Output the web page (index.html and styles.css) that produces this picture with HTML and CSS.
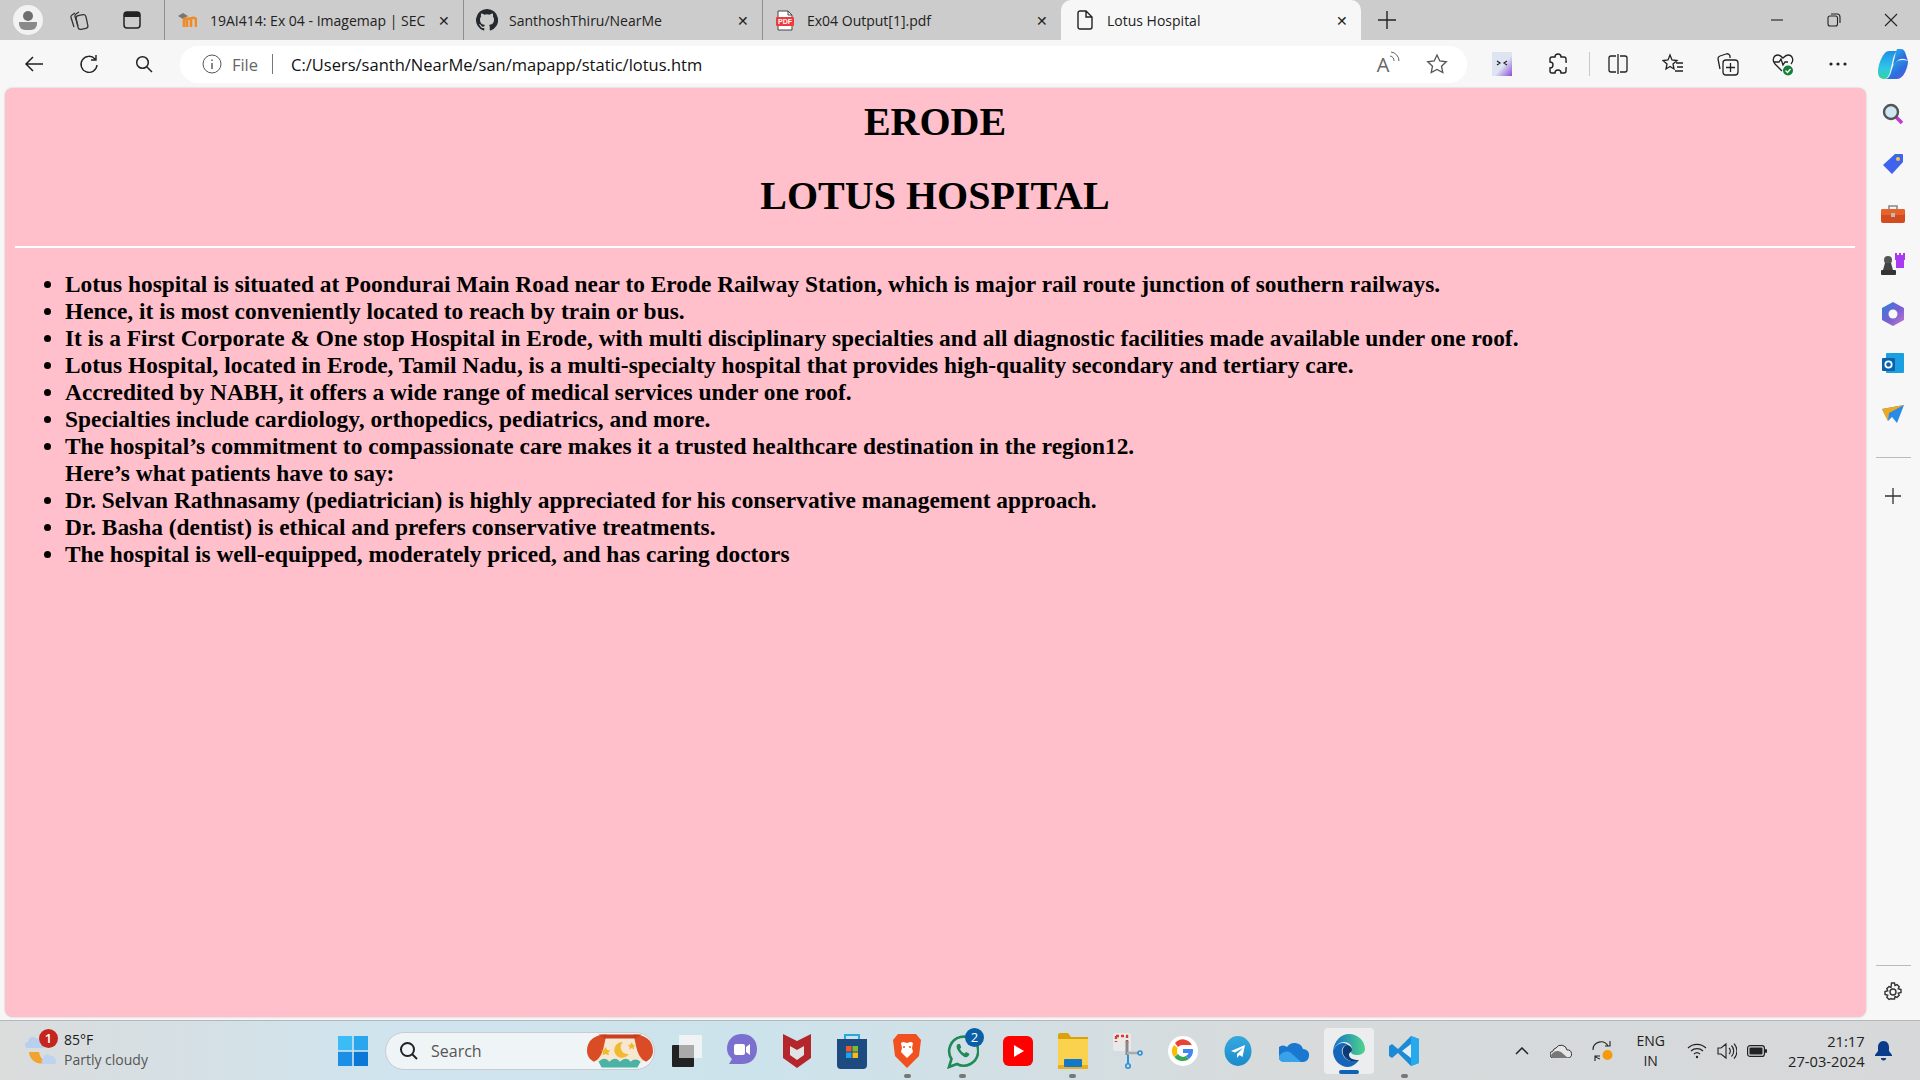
FILE: index.html
```html
<!DOCTYPE html>
<html lang="en">
<head>
    <meta charset="UTF-8">
    <meta name="viewport" content="width=device-width, initial-scale=1.0">
    <title>Lotus Hospital</title>
    <link rel="stylesheet" href="styles.css">
</head>
<body>
    <div class="tab-bar">
        <div class="tab-tools">
            <span class="profile"><svg width="20" height="22" viewBox="0 0 20 22"><circle cx="10" cy="7" r="5" fill="#6e6e6e"/><path d="M1 13h18v2a6 6 0 0 1-6 6H7a6 6 0 0 1-6-6z" fill="#8a8a8a"/></svg></span>
            <span class="tool-slot"><svg width="22" height="22" viewBox="0 0 22 22" fill="none" stroke="#333" stroke-width="1.3"><rect x="9" y="6" width="10" height="14" rx="2.5" transform="rotate(-12 14 13)"/><path d="M7 4 4 6c-1 .6-1.300 1.500-1 2.500L6 18M11 3 8 5c-1 .6-1.300 1.500-1 2.500L10 17"/></svg></span>
            <span class="tool-slot"><svg width="20" height="20" viewBox="0 0 20 20"><rect x="2" y="2" width="16" height="16" rx="3" fill="none" stroke="#222" stroke-width="1.500"/><path d="M2 5a3 3 0 0 1 3-3h10a3 3 0 0 1 3 3v2H2z" fill="#222"/></svg></span>
        </div>
        <div class="tab">
            <svg class="tab-icon" width="20" height="16" viewBox="0 0 20 16"><path d="M1 4 6 1l5 3-5 3z" fill="#777"/><path d="M7 15V8c0-2 3-2 3 0v7m0-7c0-2 4-2 4 0v7m0-7c0-3 5-3 5 0v7" fill="none" stroke="#f08a24" stroke-width="2.600"/></svg>
            <span class="tab-title">19AI414: Ex 04 - Imagemap | SEC</span>
            <span class="tab-close">&#10005;</span>
        </div>
        <div class="tab">
            <svg class="tab-icon" width="22" height="22" viewBox="0 0 16 16"><path fill="#24292f" d="M8 0a8 8 0 0 0-2.530 15.590c.4.070.55-.17.55-.38v-1.340c-2.230.48-2.700-1.070-2.700-1.070-.36-.93-.89-1.170-.89-1.170-.73-.5.050-.49.050-.49.800.060 1.230.83 1.230.83.710 1.220 1.870.870 2.330.660.070-.520.280-.870.510-1.070-1.780-.2-3.640-.89-3.640-3.950 0-.870.310-1.590.820-2.150-.080-.2-.360-1.020.080-2.120 0 0 .670-.210 2.200.820a7.600 7.600 0 0 1 4 0c1.530-1.040 2.200-.820 2.200-.820.440 1.100.160 1.920.080 2.120.510.560.820 1.270.820 2.150 0 3.070-1.870 3.750-3.650 3.950.290.250.540.730.540 1.480v2.190c0 .210.150.460.550.380A8 8 0 0 0 8 0z"/></svg>
            <span class="tab-title">SanthoshThiru/NearMe</span>
            <span class="tab-close">&#10005;</span>
        </div>
        <div class="tab">
            <svg class="tab-icon" width="20" height="22" viewBox="0 0 20 22"><path d="M3 2h10l4 4v15H3z" fill="#fff" stroke="#444"/><path d="M13 2v4h4" fill="none" stroke="#444"/><rect x="1" y="8" width="18" height="9" rx="1" fill="#f03a3e"/><text x="10" y="15" class="pdf-mark">PDF</text></svg>
            <span class="tab-title">Ex04 Output[1].pdf</span>
            <span class="tab-close">&#10005;</span>
        </div>
        <div class="tab tab-active">
            <svg class="tab-icon" width="16" height="20" viewBox="0 0 16 20" fill="none" stroke="#222" stroke-width="1.400"><path d="M3 1h6l6 6v10a2 2 0 0 1-2 2H3a2 2 0 0 1-2-2V3a2 2 0 0 1 2-2zM9 1v6h6"/></svg>
            <span class="tab-title">Lotus Hospital</span>
            <span class="tab-close">&#10005;</span>
        </div>
        <div class="new-tab"><svg width="18" height="18" viewBox="0 0 18 18" stroke="#222" stroke-width="1.400"><path d="M9 0v18M0 9h18"/></svg></div>
        <div class="window-controls">
            <svg width="14" height="14" viewBox="0 0 14 14" stroke="#222" stroke-width="1.100"><path d="M1 7h12"/></svg>
            <svg width="14" height="14" viewBox="0 0 14 14" fill="none" stroke="#222" stroke-width="1.100"><rect x="1" y="3" width="9.500" height="10" rx="2"/><path d="M4 1h6a3 3 0 0 1 3 3v6"/></svg>
            <svg width="14" height="14" viewBox="0 0 14 14" stroke="#222" stroke-width="1.100"><path d="m1 1 12 12M13 1 1 13"/></svg>
        </div>
    </div>

    <div class="toolbar">
        <span class="nav-btn"><svg width="20" height="18" viewBox="0 0 20 18" fill="none" stroke="#222" stroke-width="1.500"><path d="M19 9H2M9 2 2 9l7 7"/></svg></span>
        <span class="nav-btn"><svg width="20" height="20" viewBox="0 0 20 20" fill="none" stroke="#222" stroke-width="1.400"><path d="M16 5a8 8 0 1 0 2 6M17 1v5h-5"/></svg></span>
        <span class="nav-btn"><svg width="18" height="18" viewBox="0 0 18 18" fill="none" stroke="#222" stroke-width="1.500"><circle cx="7.500" cy="7.500" r="5.800"/><path d="m12 12 5 5"/></svg></span>
        <div class="address-bar">
            <svg width="20" height="20" viewBox="0 0 20 20" fill="none" stroke="#555"><circle cx="10" cy="10" r="9"/><path d="M10 9v6M10 5.500v1.500" stroke-width="1.400"/></svg>
            <span class="addr-file">File</span>
            <span class="addr-sep"></span>
            <span class="addr-url">C:/Users/santh/NearMe/san/mapapp/static/lotus.htm</span>
            <span class="addr-tool addr-read">A<svg width="12" height="14" viewBox="0 0 12 14" fill="none" stroke="#666"><path d="M1 5a5 5 0 0 1 4 5M2 1a9 9 0 0 1 8 9"/></svg></span>
            <span class="addr-tool"><svg width="22" height="22" viewBox="0 0 22 22" fill="none" stroke="#555" stroke-width="1.300"><path d="m11 2 2.800 6 6.500.8-4.800 4.400 1.300 6.400L11 16.400l-5.800 3.200 1.300-6.400L1.700 8.800 8.200 8z"/></svg></span>
        </div>
        <div class="toolbar-icons">
            <span class="bar-icon"><svg width="20" height="24" viewBox="0 0 20 24"><defs><linearGradient id="extFill" x1="0" y1="0" x2="1" y2="1"><stop offset=".55" stop-color="#dfe4f2"/><stop offset="1" stop-color="#8a4fd8"/></linearGradient></defs><rect width="20" height="24" fill="url(#extFill)"/><path d="m5 9 3 2-3 2M15 9l-3 2 3 2" fill="none" stroke="#222" stroke-width="1.200"/></svg></span>
            <span class="bar-icon"><svg width="20" height="22" viewBox="0 0 20 22" fill="none" stroke="#222" stroke-width="1.400"><path d="M8 4a3 3 0 0 1 6 0h3a2 2 0 0 1 2 2v3a3 3 0 0 1 0 6v3a2 2 0 0 1-2 2h-3a3 3 0 0 0-6 0H5a2 2 0 0 1-2-2v-3a3 3 0 0 0 0-6V6a2 2 0 0 1 2-2z"/></svg></span>
            <span class="bar-sep"></span>
            <span class="bar-icon"><svg width="20" height="22" viewBox="0 0 20 22" fill="none" stroke="#222" stroke-width="1.300"><path d="M8 3H3a2 2 0 0 0-2 2v12a2 2 0 0 0 2 2h5M12 3h5a2 2 0 0 1 2 2v12a2 2 0 0 1-2 2h-5M10 1v20"/></svg></span>
            <span class="bar-icon"><svg width="22" height="22" viewBox="0 0 22 22" fill="none" stroke="#222" stroke-width="1.300"><path d="m8 2 2 5 5 .5-4 3.500 1 5-4-2.500L4 16l1-5-4-3.500L6 7zM14 10h7M15 14h6M13 18h8"/></svg></span>
            <span class="bar-icon"><svg width="22" height="24" viewBox="0 0 22 24" fill="none" stroke="#222" stroke-width="1.300"><path d="M3 17 1 7a3 3 0 0 1 2-3l6-2a3 3 0 0 1 4 2v2"/><rect x="6" y="8" width="15" height="15" rx="3"/><path d="M13.500 11v9M9 15.500h9"/></svg></span>
            <span class="bar-icon"><svg width="22" height="24" viewBox="0 0 22 24" fill="none" stroke="#222" stroke-width="1.300"><path d="M10 19 3 12C0 9 1 3 6 3c2 0 3 1 5 3 2-2 3-3 5-3 5 0 6 6 3 9M2 10h5l2-3 2 6 2-3h3"/><circle cx="16" cy="18.500" r="5" fill="#14813a" stroke="none"/><path d="m13.500 18.500 2 2 3-3.500" stroke="#fff"/></svg></span>
            <span class="bar-icon"><svg width="18" height="4" viewBox="0 0 18 4" fill="#222"><circle cx="2" cy="2" r="1.600"/><circle cx="9" cy="2" r="1.600"/><circle cx="16" cy="2" r="1.600"/></svg></span>
            <span class="bar-icon"><svg width="30" height="32" viewBox="0 0 30 32"><defs><linearGradient id="copA" x1="0" y1="0" x2="0" y2="1"><stop offset="0" stop-color="#1f8fe8"/><stop offset=".6" stop-color="#2fc6e8"/><stop offset="1" stop-color="#35d49a"/></linearGradient><linearGradient id="copB" x1="0" y1="0" x2="1" y2="1"><stop offset="0" stop-color="#2fb8e8"/><stop offset=".6" stop-color="#2a6fe0"/><stop offset="1" stop-color="#6a4fd8"/></linearGradient></defs><path d="M19 1h4c2 0 3 1 4 3l3 9c-3-3-8-3-11 0l-4 3c2-6 2-11 4-15z" fill="url(#copB)"/><path d="M11 3h9c-3 1-4 4-5 8l-3 13c-1 4-3 7-6 7-4 0-6-3-6-7C0 17 5 3 11 3z" fill="url(#copA)"/><path d="M16 15c3-3 9-4 14-2 0 6-4 18-11 18H7c3 0 5-3 6-7z" fill="url(#copB)"/></svg></span>
        </div>
    </div>

    <div class="main">
        <div class="page">
            <h1>ERODE</h1>
            <h1>LOTUS HOSPITAL</h1>
            <hr>
            <h3>
                <ul>
                    <li>Lotus hospital is situated at Poondurai Main Road near to Erode Railway Station, which is major rail route junction of southern railways.</li>
                    <li>Hence, it is most conveniently located to reach by train or bus.</li>
                    <li>It is a First Corporate &amp; One stop Hospital in Erode, with multi disciplinary specialties and all diagnostic facilities made available under one roof.</li>
                    <li>Lotus Hospital, located in Erode, Tamil Nadu, is a multi-specialty hospital that provides high-quality secondary and tertiary care.</li>
                    <li>Accredited by NABH, it offers a wide range of medical services under one roof.</li>
                    <li>Specialties include cardiology, orthopedics, pediatrics, and more.</li>
                    <li>The hospital’s commitment to compassionate care makes it a trusted healthcare destination in the region12.<br>Here’s what patients have to say:</li>
                    <li>Dr. Selvan Rathnasamy (pediatrician) is highly appreciated for his conservative management approach.</li>
                    <li>Dr. Basha (dentist) is ethical and prefers conservative treatments.</li>
                    <li>The hospital is well-equipped, moderately priced, and has caring doctors</li>
                </ul>
            </h3>
        </div>
        <div class="sidebar">
            <span class="side-slot"><svg width="22" height="22" viewBox="0 0 22 22"><path d="m13 13 7 7" stroke="#c535d8" stroke-width="3.500"/><circle cx="9" cy="9" r="7" fill="#cfe6f5" stroke="#555" stroke-width="2.400"/></svg></span>
            <span class="side-slot"><svg width="22" height="22" viewBox="0 0 22 22"><path d="M13 1h7a1 1 0 0 1 1 1v7L10 21 1 12z" fill="#3e63ee"/><circle cx="16" cy="6" r="2" fill="#f3c93c"/></svg></span>
            <span class="side-slot"><svg width="24" height="20" viewBox="0 0 24 20"><path d="M8 5V2h8v3" fill="none" stroke="#888" stroke-width="1.600"/><rect y="5" width="24" height="14" rx="2" fill="#d44b1f"/><rect y="5" width="24" height="6" rx="2" fill="#e8622e"/><rect x="10" y="9" width="4" height="4" fill="#bbb"/></svg></span>
            <span class="side-slot"><svg width="24" height="24" viewBox="0 0 24 24"><path d="M14 1h2v2h2V1h2v2h2V1h2v7h-1v8h-8V8h-1z" fill="#a93af0"/><circle cx="7" cy="8" r="4" fill="#555"/><path d="M4 11h6l2 7H2z" fill="#444"/><rect y="18" width="15" height="5" rx="1" fill="#333"/></svg></span>
            <span class="side-slot"><svg width="22" height="24" viewBox="0 0 22 24"><defs><linearGradient id="msFill" x1="0" y1="0" x2="1" y2="1"><stop offset="0" stop-color="#2a7fe0"/><stop offset=".55" stop-color="#7a5fd0"/><stop offset="1" stop-color="#c77ad8"/></linearGradient></defs><path d="M11 0 22 6v12l-11 6L0 18V6z" fill="url(#msFill)"/><circle cx="11" cy="12" r="4.500" fill="#f7f7f7"/></svg></span>
            <span class="side-slot"><svg width="22" height="22" viewBox="0 0 22 22"><rect x="4" y="0" width="18" height="20" rx="1" fill="#1aa0e0"/><rect y="5" width="13" height="13" rx="1" fill="#0a62ad"/><circle cx="6.500" cy="11.500" r="3.200" fill="none" stroke="#fff" stroke-width="1.700"/></svg></span>
            <span class="side-slot"><svg width="22" height="18" viewBox="0 0 22 18"><path d="M0 4 22 0 15 18l-5-6-4 4z" fill="#2a8ae8"/><path d="M0 4 22 0 7 8 6 16z" fill="#f0a81e"/></svg></span>
            <span class="sidebar-rule"></span>
            <span class="side-slot side-plus"><svg width="16" height="16" viewBox="0 0 16 16" stroke="#333" stroke-width="1.300"><path d="M8 0v16M0 8h16"/></svg></span>
            <span class="sidebar-spacer"></span>
            <span class="sidebar-rule sidebar-rule-low"></span>
            <span class="side-slot"><svg width="20" height="20" viewBox="0 0 20 20" fill="none" stroke="#333" stroke-width="1.400"><circle cx="10" cy="10" r="3"/><path d="M8.500 1h3l.5 2.500 2-1 2.200 2.200-1 2 2.800.8v3l-2.800.8 1 2-2.200 2.200-2-1-.5 2.500h-3L8 16.500l-2 1-2.200-2.200 1-2L2 12.500v-3l2.800-.8-1-2L6 4.500l2 1z"/></svg></span>
        </div>
    </div>

    <div class="taskbar">
        <div class="weather">
            <div class="weather-icon">
                <svg width="36" height="38" viewBox="0 0 36 38"><path d="M5 10a5 5 0 0 1 9-3 5 5 0 0 1 6 4 3 3 0 0 1 0 5H5a3 3 0 0 1 0-6z" fill="#b8cfee"/><path d="M6 20a12 12 0 0 0 18 10 12 12 0 0 1-8-10z" fill="#f2a22e"/><path d="M20 27a4 4 0 0 1 7-3 4 4 0 0 1 5 3 3 3 0 0 1 0 5H20a3 3 0 0 1 0-5z" fill="#bcd3f2"/></svg>
                <span class="weather-badge">1</span>
            </div>
            <div class="weather-text">
                <div class="weather-temp">85°F</div>
                <div class="weather-desc">Partly cloudy</div>
            </div>
        </div>
        <span class="task-start"><svg width="30" height="30" viewBox="0 0 30 30"><rect width="14.200" height="14.200" fill="#3cbcf6"/><rect x="15.800" width="14.200" height="14.200" fill="#2aa6ee"/><rect y="15.800" width="14.200" height="14.200" fill="#1a8fe6"/><rect x="15.800" y="15.800" width="14.200" height="14.200" fill="#0a78d6"/></svg></span>
        <div class="task-search">
            <svg width="20" height="20" viewBox="0 0 20 20" fill="none" stroke="#222" stroke-width="2"><circle cx="8.500" cy="8.500" r="6.500"/><path d="m13 13 5 5"/></svg>
            <span class="task-search-label">Search</span>
            <svg class="search-art" width="66" height="34" viewBox="0 0 68 34"><rect x="8" width="52" height="34" rx="15" fill="#f6e7d0"/><path d="M0 17C0 6 8 0 20 0l-3 14c-2 8-6 13-10 14C3 26 0 22 0 17zM68 17C68 6 60 0 48 0l3 14c2 8 6 13 10 14 4-2 7-6 7-11z" fill="#d94c26"/><path d="M12 0h44l-6 4H18z" fill="#c93f20"/><path d="M37 8a8 8 0 1 0 6 12 7 7 0 0 1-6-12z" fill="#f0b92e"/><path d="m19 13 2 3 3 .5-2 2 .5 3-3.500-1.500-3 1.500.5-3-2-2 3-.5zM46 8l1.500 2.500 2.500.5-2 1.500.5 3-2.500-1.500-2.500 1.500.5-3-2-1.500 2.500-.5z" fill="#f0b92e"/><path d="M12 28c4-4 8-4 11 0 4-4 8-4 11 0 4-4 8-4 11 0 3-3 7-3 10 0l-3 6H15z" fill="#49b3a6"/></svg>
        </div>
        <div class="task-icons">
            <span class="task-icon"><svg width="30" height="32" viewBox="0 0 30 32"><rect y="10" width="22" height="22" rx="1" fill="#222"/><rect x="7" width="23" height="23" rx="1" fill="#f4f4f4" opacity=".9"/><rect x="7" y="10" width="15" height="13" fill="#aaa"/></svg></span>
            <span class="task-icon"><svg width="30" height="34" viewBox="0 0 30 34"><path d="M15 0c9 0 15 6 15 15s-6 15-15 15H2l3-5C2 22 0 19 0 15 0 6 6 0 15 0z" fill="#7b6fd0"/><rect x="7" y="10" width="11" height="11" rx="2" fill="#fff"/><path d="m19 13 4-3v11l-4-3z" fill="#fff"/></svg></span>
            <span class="task-icon"><svg width="28" height="34" viewBox="0 0 28 34"><path d="M0 0l14 7 14-7v24l-14 10L0 24z" fill="#b5262c"/><path d="M7 12l7 4 7-4v9l-7 5-7-5z" fill="#dfe3e6"/></svg></span>
            <span class="task-icon"><svg width="30" height="36" viewBox="0 0 30 36"><path d="M8 8V2h14v6" fill="none" stroke="#25a7e0" stroke-width="2"/><path d="M0 6h30v26a4 4 0 0 1-4 4H4a4 4 0 0 1-4-4z" fill="#1d4a80"/><rect x="9" y="13" width="5.500" height="5.500" fill="#ef5a2a"/><rect x="15.500" y="13" width="5.500" height="5.500" fill="#7fba2a"/><rect x="9" y="19.500" width="5.500" height="5.500" fill="#1ea3e8"/><rect x="15.500" y="19.500" width="5.500" height="5.500" fill="#f7b81a"/></svg></span>
            <span class="task-icon task-running"><svg width="28" height="34" viewBox="0 0 28 34"><path d="M5 0h18l5 6-2 16-12 12L2 22 0 6z" fill="#f1501f"/><path d="M8 9c3-2 4 0 6 0s3-2 6 0l-1 5 1 4-6 6-6-6 1-4z" fill="#fff"/><circle cx="11" cy="13" r="1" fill="#f1501f"/><circle cx="17" cy="13" r="1" fill="#f1501f"/></svg></span>
            <span class="task-icon task-running">
                <svg width="32" height="36" viewBox="0 0 32 36" fill="none"><path d="M2 34l2.500-8A14.500 14.500 0 1 1 10 31z" stroke="#1f8a58" stroke-width="2.600"/><path d="M11 11c-2 1-2 4 1 8s6 6 8 5 3-3 2-3.500l-3-1.500-1.500 1.500c-2-.8-3.500-2.500-4.500-4.500l1.200-1.500L13 11z" fill="#1f8a58"/></svg>
                <span class="task-badge">2</span>
            </span>
            <span class="task-icon"><svg width="30" height="30" viewBox="0 0 30 30"><rect width="30" height="30" rx="6" fill="#f00"/><path d="m11 9 10 6-10 6z" fill="#fff"/></svg></span>
            <span class="task-icon task-running"><svg width="30" height="36" viewBox="0 0 30 36"><path d="M0 2a2 2 0 0 1 2-2h8l3 4h17v4H0z" fill="#dca20e"/><path d="M0 6h30v30H0z" fill="#fbd24e"/><path d="M0 32h30v4H0z" fill="#e8b020"/><rect x="6" y="26" width="18" height="8" rx="1" fill="#1478c8"/></svg></span>
            <span class="task-icon"><svg width="30" height="36" viewBox="0 0 30 36" fill="none"><rect width="18" height="18" rx="2" fill="#e9e9e9"/><path d="M3 3h11v8M3 3v6" stroke="#d83c2c" stroke-width="2.400" stroke-dasharray="3 2"/><path d="M14 8v14" stroke="#888" stroke-width="3"/><path d="M14 20h12" stroke="#aaa" stroke-width="2.500"/><circle cx="27" cy="20" r="2" stroke="#2a90d8" stroke-width="1.600"/><circle cx="15" cy="33" r="2.200" stroke="#2a90d8" stroke-width="1.600"/><path d="M15 22v9" stroke="#2a90d8" stroke-width="2"/></svg></span>
            <span class="task-icon"><svg width="30" height="30" viewBox="0 0 30 30"><circle cx="15" cy="15" r="15" fill="#fff"/><path d="M15 9h8l1 .500A10 10 0 0 0 7 7l3 4a6 6 0 0 1 5-2z" fill="#ea4335"/><path d="M9 15c0-1 .2-2 .7-3L6 9a10 10 0 0 0 0 12l3.600-3c-.4-.9-.6-2-.6-3z" fill="#fbbc05"/><path d="M15 21a6 6 0 0 1-5-3l-3.600 3A10 10 0 0 0 15 25c2.500 0 4.500-.8 6-2l-3.500-3c-.7.600-1.500 1-2.500 1z" fill="#34a853"/><path d="M25 15c0-.7 0-1.300-.2-2H15v4h5.500c-.3 1.300-1.200 2.300-3 3l3.500 3c2.500-2 4-4.700 4-8z" fill="#4285f4"/></svg></span>
            <span class="task-icon"><svg width="28" height="30" viewBox="0 0 28 30"><defs><linearGradient id="tgFill" x1="0" y1="0" x2="0" y2="1"><stop offset="0" stop-color="#36a9e0"/><stop offset="1" stop-color="#1c8acb"/></linearGradient></defs><ellipse cx="14" cy="15" rx="13.500" ry="15" fill="url(#tgFill)"/><path d="M21 9 7 15l4 1.500L19 12l-6 6v4l2.500-3 3 2z" fill="#fff"/></svg></span>
            <span class="task-icon"><svg width="30" height="24" viewBox="0 0 30 24"><path d="M8 8a9 9 0 0 1 16 2 6 6 0 0 1 6 7 6 6 0 0 1-6 6H5a5 5 0 0 1-5-6 6 6 0 0 1 8-9z" fill="#1a78d0"/><path d="M0 17c3-4 8-6 12-3l10 9H5a5 5 0 0 1-5-6z" fill="#38a3ea"/></svg></span>
            <span class="task-icon task-active"><svg width="32" height="34" viewBox="0 0 32 34"><defs><linearGradient id="edgeFill" x1="0" y1="0" x2="1" y2="0"><stop offset="0" stop-color="#1470c8"/><stop offset="1" stop-color="#4fd68a"/></linearGradient></defs><path d="M16 0c9 0 16 7 16 15 0 4-4 6-8 6-3 0-6-1-6-3 0-1 1-1 1-3 0-4-4-7-8-7-5 0-9 4-11 9C1 7 8 0 16 0z" fill="url(#edgeFill)"/><path d="M0 17c2-5 6-8 10-8 2 0 4 1 5 2-5 0-8 5-5 10 2 5 9 8 16 5-3 4-7 7-11 7C7 33 0 26 0 17z" fill="#1565b8"/><path d="M15 11c3 1 4 3 4 5s-3 2-3 5 4 5 10 5c-5 3-12 1-15-4-3-5-1-11 4-11z" fill="#0c3c78"/></svg></span>
            <span class="task-icon task-running"><svg width="30" height="30" viewBox="0 0 30 30"><path d="M22 0 9 13 3 8 0 10v10l3 2 6-5 13 13 8-3V3z" fill="#1d8ad6"/><path d="M22 8v14l-9-7z" fill="#f7f8f8" opacity=".9"/><path d="M22 0l8 3v24l-8 3z" fill="#27a9ee"/></svg></span>
        </div>
        <div class="tray">
            <span class="tray-icon tray-caret"><svg width="14" height="8" viewBox="0 0 14 8" fill="none" stroke="#222" stroke-width="1.500"><path d="m1 7 6-6 6 6"/></svg></span>
            <span class="tray-icon tray-cloud"><svg width="22" height="14" viewBox="0 0 22 14"><path d="M6 4a6 6 0 0 1 11 2 4 4 0 0 1 1 8H4a3.500 3.500 0 0 1-1-7 4 4 0 0 1 3-3z" fill="#e6e6e6" stroke="#333"/><path d="M1 11c3-4 6-5 10-3l7 6H4a3 3 0 0 1-3-3z" fill="#777"/></svg></span>
            <span class="tray-icon tray-sync"><svg width="22" height="22" viewBox="0 0 22 22" fill="none" stroke="#222" stroke-width="1.100"><path d="M1 10a8 8 0 0 1 15-4M18 1v5h-5M3 21v-5h5M3 16a8 8 0 0 0 5 3"/><circle cx="15.500" cy="15" r="5" fill="#f59a0c" stroke="none"/></svg></span>
            <span class="tray-lang">ENG<br>IN</span>
            <span class="tray-icon tray-small"><svg width="20" height="16" viewBox="0 0 20 16" fill="none" stroke="#222" stroke-width="1.200"><path d="M1 5a13 13 0 0 1 18 0M4 8a9 9 0 0 1 12 0M7 11a4.500 4.500 0 0 1 6 0"/><circle cx="10" cy="14" r="1.200" fill="#222" stroke="none"/></svg></span>
            <span class="tray-icon tray-small"><svg width="20" height="18" viewBox="0 0 20 18" fill="none" stroke="#222" stroke-width="1.100"><path d="M1 6h3l5-4v14l-5-4H1zM12 6a4 4 0 0 1 0 6M14.500 3.500a8 8 0 0 1 0 11M17 1.500a11 11 0 0 1 0 15"/></svg></span>
            <span class="tray-icon tray-small"><svg width="20" height="12" viewBox="0 0 20 12"><rect x=".6" y=".6" width="16.800" height="10.800" rx="2.500" fill="none" stroke="#222" stroke-width="1.200"/><rect x="2.500" y="2.500" width="13" height="7" rx="1" fill="#222"/><rect x="18" y="4" width="2" height="4" rx="1" fill="#222"/></svg></span>
            <div class="clock">
                <div>21:17</div>
                <div>27-03-2024</div>
            </div>
            <span class="tray-icon tray-bell"><svg width="17" height="20" viewBox="0 0 17 20" fill="#0a3a8a"><path d="M8.500 0C5 0 3 3 3 6v4l-3 4v1h17v-1l-3-4V6c0-3-2-6-5.500-6zM6 17h5a2.500 2.500 0 0 1-5 0z"/></svg></span>
        </div>
    </div>
</body>
</html>
```

FILE: styles.css
```css
html, body {
    margin: 0;
    height: 100%;
}

body {
    width: 1920px;
    height: 1080px;
    overflow: hidden;
    display: flex;
    flex-direction: column;
    background-color: #f7f7f7;
    font-family: "Open Sans", "Noto Sans", sans-serif;
    color: #1a1a1a;
}

/* tab strip */
.tab-bar {
    height: 40px;
    background-color: #cccccc;
    display: flex;
    align-items: stretch;
    flex-shrink: 0;
}

.tab-tools {
    width: 164px;
    display: flex;
    align-items: center;
    padding-left: 13px;
    box-sizing: border-box;
}

.profile {
    width: 30px;
    height: 30px;
    border-radius: 50%;
    background-color: #f2f2f2;
    display: flex;
    align-items: center;
    justify-content: center;
    margin-right: 9px;
}

.tool-slot {
    width: 53px;
    display: flex;
    justify-content: center;
}

.tab {
    width: 299px;
    display: flex;
    align-items: center;
    box-sizing: border-box;
    padding: 0 13px 0 12px;
    border-left: 1px solid #8f8f8f;
    background-clip: padding-box;
}

.tab-icon {
    flex-shrink: 0;
}

.tab-title {
    flex: 1;
    margin-left: 13px;
    font-size: 14px;
    white-space: nowrap;
    overflow: hidden;
    color: #222;
}

.tab:nth-child(3) .tab-title {
    margin-left: 11px;
}

.tab:nth-child(4) .tab-title {
    margin-left: 12px;
}

.tab-close {
    font-size: 14px;
    color: #222;
    margin-left: 6px;
}

.tab-active {
    background-color: #f7f7f7;
    border-left: none;
    border-radius: 10px 10px 0 0;
    width: 300px;
    padding-left: 16px;
}

.tab-active .tab-title {
    margin-left: 14px;
}

.new-tab {
    width: 52px;
    display: flex;
    align-items: center;
    justify-content: center;
}

.window-controls {
    flex: 1;
    display: flex;
    align-items: center;
    justify-content: flex-end;
    gap: 43px;
    padding-right: 22px;
}

/* address row */
.toolbar {
    height: 48px;
    display: flex;
    align-items: center;
    flex-shrink: 0;
    padding-left: 12px;
}

.nav-btn {
    width: 55px;
    display: flex;
    justify-content: center;
}

.nav-btn:first-child {
    width: 45px;
    margin-right: 5px;
}

.address-bar {
    width: 1288px;
    height: 37px;
    margin-left: 8px;
    margin-right: 7px;
    background-color: white;
    border-radius: 18px;
    display: flex;
    align-items: center;
    box-sizing: border-box;
    padding-left: 22px;
}

.addr-file {
    font-size: 16.5px;
    color: #666;
    margin-left: 10px;
}

.addr-sep {
    width: 1px;
    height: 20px;
    background-color: #777;
    margin: 0 18px 0 14px;
}

.addr-url {
    flex: 1;
    font-size: 16.5px;
    color: #111;
}

.addr-tool {
    width: 60px;
    display: flex;
    justify-content: center;
    align-items: flex-start;
}

.addr-read {
    font-size: 20px;
    color: #666;
    width: 36px;
}

.toolbar-icons {
    display: flex;
    align-items: center;
}

.bar-icon {
    width: 55px;
    display: flex;
    justify-content: center;
}

.bar-sep {
    width: 1px;
    height: 24px;
    background-color: #c8c8c8;
    margin-left: 5px;
}

/* page */
.main {
    flex: 1;
    display: flex;
    min-height: 0;
}

.page {
    width: 1861px;
    margin-left: 5px;
    margin-bottom: 3px;
    background-color: #ffc0cb;
    border-radius: 8px;
    box-sizing: border-box;
    padding: 0 11px 0 10px;
    font-family: "Liberation Serif", "Times New Roman", serif;
    color: black;
    box-shadow: 0 0 2px #bbb;
}

.page h1 {
    font-size: 40px;
    line-height: 46px;
    margin: 28px 0 27px;
    text-align: center;
}

.page h1:first-child {
    margin-top: 11px;
}

.page hr {
    border: none;
    height: 2px;
    background-color: #fff;
    margin: 0;
}

.page h3 {
    font-size: 23.4px;
    line-height: 27px;
    margin: 23px 0 0;
}

.page ul {
    margin: 0;
    padding-left: 50px;
}

.sidebar {
    flex: 1;
    display: flex;
    flex-direction: column;
    align-items: center;
    padding: 1px 0 3px;
}

.side-slot {
    height: 50px;
    display: flex;
    align-items: center;
    flex-shrink: 0;
}

.sidebar-rule {
    width: 35px;
    height: 1px;
    background-color: #bbb;
    margin: 18px 0 13px;
    flex-shrink: 0;
}

.sidebar-spacer {
    flex: 1;
}

.sidebar-rule-low {
    margin: 0 0 1px;
}

/* windows taskbar */
.taskbar {
    height: 60px;
    flex-shrink: 0;
    box-sizing: border-box;
    border-top: 1px solid #b4b8ba;
    background: linear-gradient(90deg, #dbdcdc 0%, #cfe4ee 20%, #cde3ec 40%, #d7dbdc 65%, #d6d8da 100%);
    display: flex;
    align-items: center;
}

.weather {
    width: 338px;
    display: flex;
    align-items: center;
    box-sizing: border-box;
    padding-left: 23px;
}

.weather-icon {
    position: relative;
    width: 40px;
    height: 38px;
}

.weather-badge {
    position: absolute;
    left: 16px;
    top: -3px;
    width: 19px;
    height: 19px;
    border-radius: 50%;
    background-color: #c4261d;
    color: white;
    font-size: 13px;
    font-weight: 600;
    text-align: center;
    line-height: 19px;
}

.weather-text {
    margin: -2px 0 0 1px;
    font-size: 14px;
    line-height: 20px;
}

.weather-desc {
    color: #555;
}

.task-start {
    width: 30px;
    display: flex;
}

.task-search {
    width: 270px;
    height: 38px;
    margin-left: 17px;
    box-sizing: border-box;
    border: 1px solid #c8ccce;
    border-radius: 19px;
    background-color: #eff4f6;
    display: flex;
    align-items: center;
    padding-left: 13px;
    overflow: hidden;
}

.task-search-label {
    flex: 1;
    margin-left: 12px;
    font-size: 16px;
    color: #555;
}

.search-art {
    margin-right: 1px;
}

.task-icons {
    display: flex;
    margin-left: 4px;
}

.task-icon {
    width: 55.2px;
    height: 46px;
    display: flex;
    align-items: center;
    justify-content: center;
    position: relative;
}

.task-running::after,
.task-active::after {
    content: "";
    position: absolute;
    bottom: -4px;
    left: 50%;
    width: 7px;
    height: 4px;
    margin-left: -3.5px;
    border-radius: 2px;
    background-color: #777;
}

.task-active {
    background-color: #ecedee;
    border-radius: 4px;
    width: 50px;
    margin: 0 2.6px;
}

.task-active::after {
    width: 20px;
    margin-left: -10px;
    background-color: #0f62b4;
    bottom: 0;
}

.task-badge {
    position: absolute;
    top: 0;
    left: 30px;
    width: 19px;
    height: 19px;
    border-radius: 50%;
    background-color: #0b5fa8;
    color: white;
    font-size: 13px;
    text-align: center;
    line-height: 19px;
}

.tray {
    flex: 1;
    display: flex;
    align-items: center;
    padding-left: 83px;
}

.tray-icon {
    display: flex;
    justify-content: center;
}

.tray-caret {
    width: 14px;
}

.tray-cloud {
    width: 22px;
    margin-left: 21px;
}

.tray-sync {
    width: 22px;
    margin-left: 20px;
}

.tray-lang {
    width: 40px;
    margin-left: 17px;
    font-size: 14px;
    line-height: 20px;
    text-align: center;
    color: #222;
}

.tray-small {
    width: 20px;
    margin-left: 10px;
}

.tray-lang + .tray-small {
    margin-left: 16px;
}

.clock {
    width: 90px;
    margin-left: 8px;
    font-size: 14.7px;
    line-height: 20px;
    text-align: right;
    color: #222;
    white-space: nowrap;
}

.tray-bell {
    margin-left: 10px;
}

.pdf-mark {
    font-family: "Liberation Sans", sans-serif;
    font-size: 7px;
    font-weight: bold;
    fill: white;
    text-anchor: middle;
}
```
